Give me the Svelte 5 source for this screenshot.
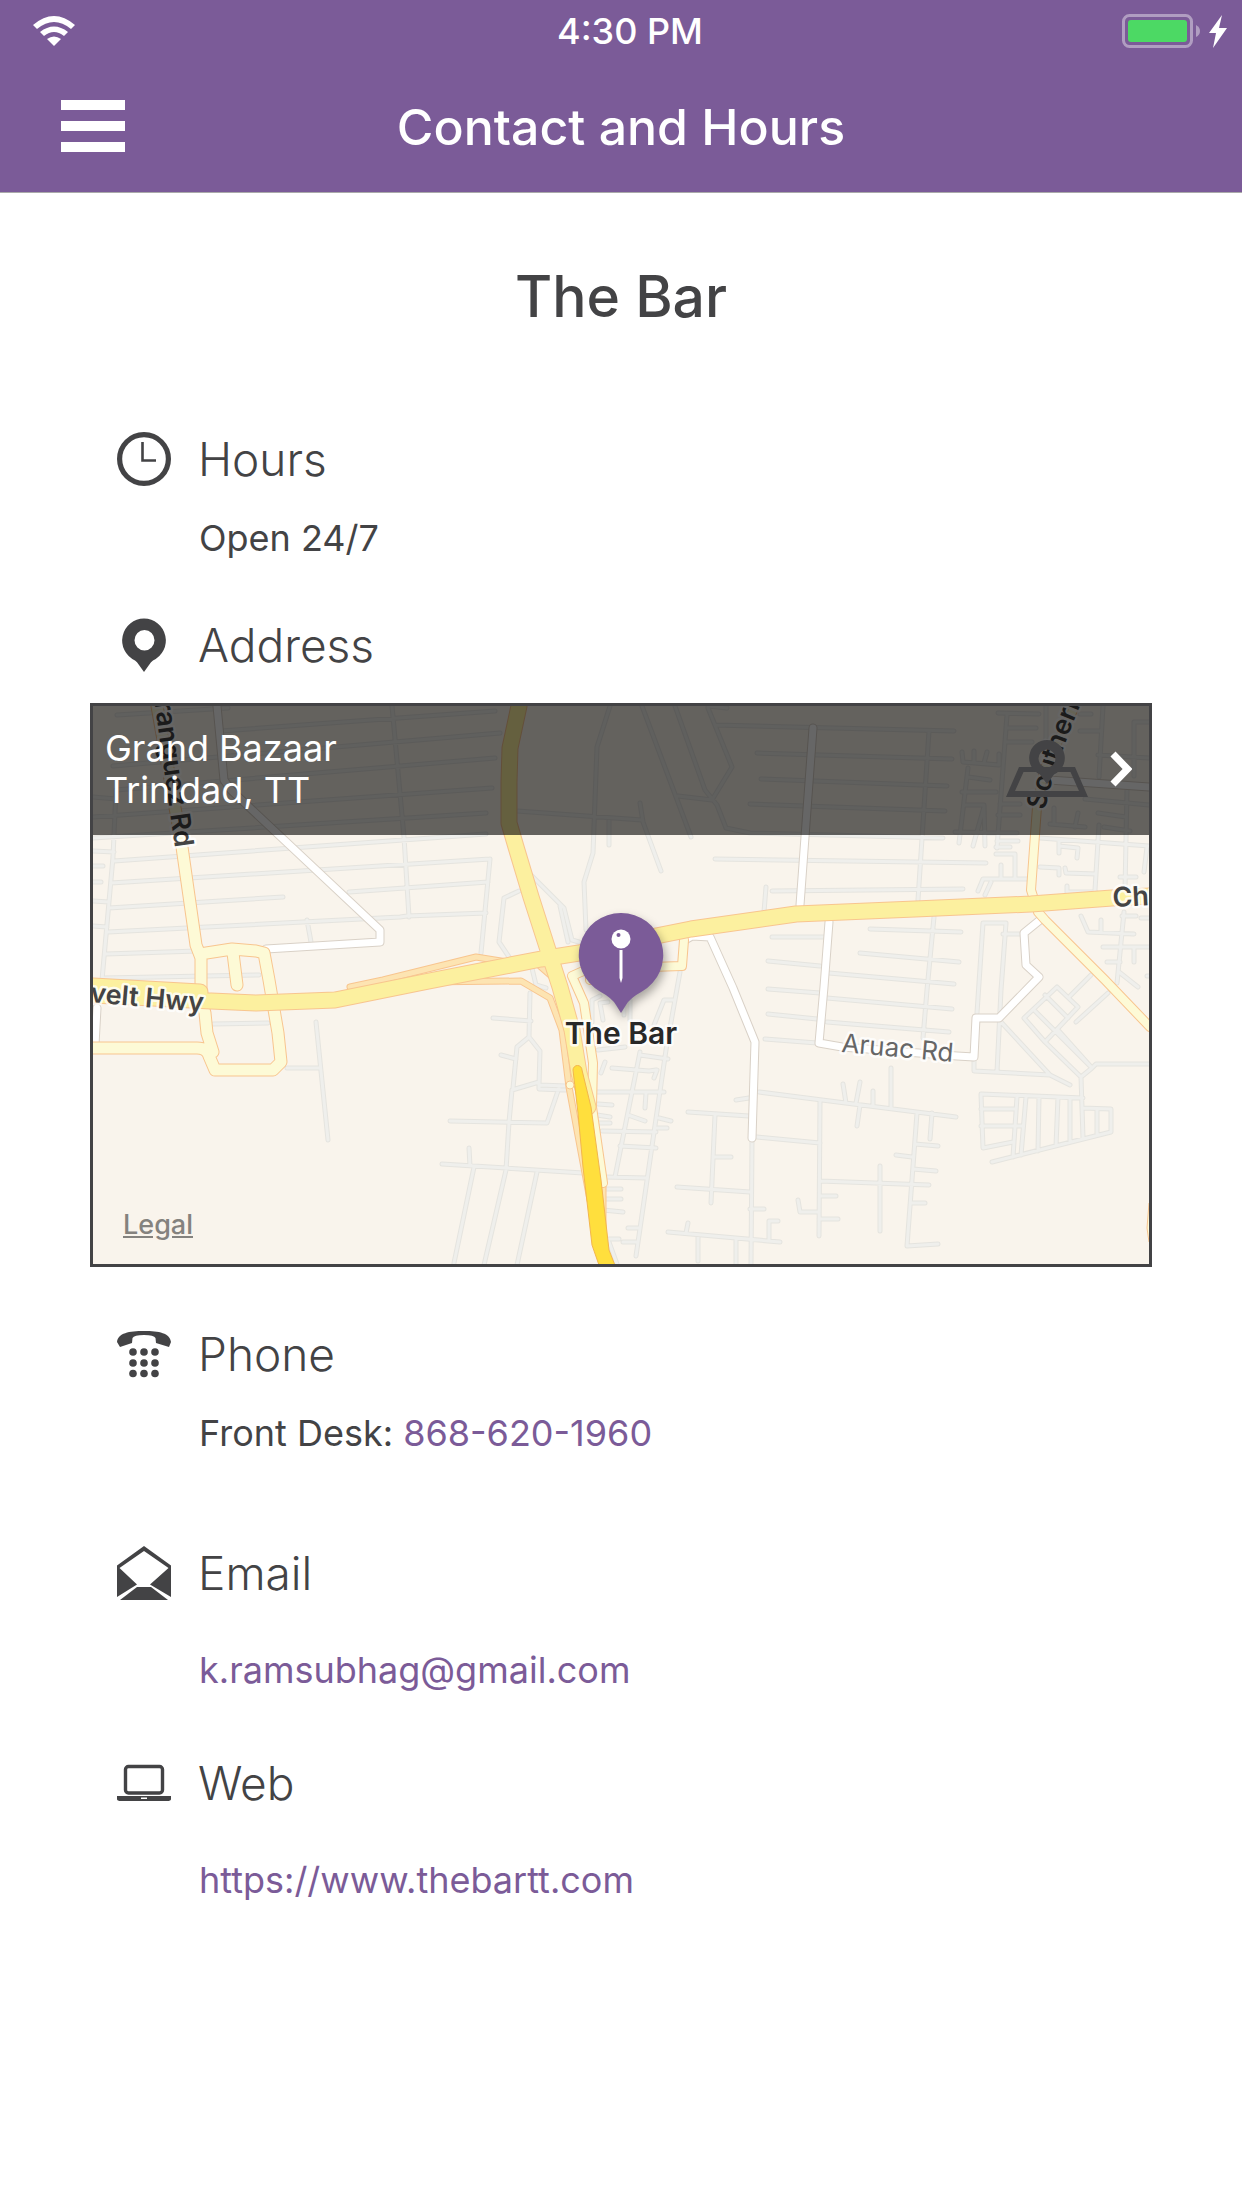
<script lang="ts">
	const place = {
		name: 'The Bar',
		hours: 'Open 24/7',
		address: ['Grand Bazaar', 'Trinidad, TT'],
		phone: '868-620-1960',
		email: 'k.ramsubhag@gmail.com',
		web: 'https://www.thebartt.com'
	};

	// map geometry, grouped by road class
	const streets = [
		// west blocks
		'M117 715L228 708M221 731L495 711M113 766L500 733M116 790L495 758M93 817L492 788M93 838L486 813',
		'M114 861L486 834M111 883L490 859M349 892L488 882M109 908L283 897M108 932L400 917L407 916L486 913',
		'M106 954L197 951M104 978L259 975M93 851L114 852M93 866H103M93 882H101M93 901L109 902M93 926L107 927M93 797L116 799',
		'M116 790L113 857L102 980M392 706L404 837L409 917M490 859L481 953M307 920L311 942M213 1024L268 1023',
		'M316 1022L328 1140M287 1068H320M493 1018L531 1021M530 993L529 1037L517 1047L513 1088M529 1037L540 1051L539 1085L566 1086',
		'M566 1090L539 1089L539 1082L512 1090L509 1122L506 1170L484 1265M559 1088L547 1123L450 1121M501 1055L516 1059',
		'M442 1164L583 1173M469 1148L470 1166M474 1167L454 1263M537 1172L517 1265',
		'M529 873L564 908L572 940L579 942M560 906L568 942M519 891L504 898L499 942L509 957M530 960L536 985L546 988',
		// north
		'M610 706L597 747L593 853L584 882L586 930M517 811L642 820M609 818V845M642 706L691 837',
		'M675 706L705 790L717 805L726 828L750 833L943 838M708 708L732 767L712 800L678 796M708 706L727 708',
		'M715 725L954 731M757 753L952 759M761 779L947 786M750 804L945 811M715 859L986 863M772 891L963 889',
		'M929 731L918 900M766 887L764 912M640 803L643 822L661 871',
		// east of the pin
		'M772 937H824M870 929L961 932M860 953L959 962M768 961L820 966M829 973L954 984M934 917L927 990L923 1038',
		'M768 989L820 993M827 998L952 1009M768 1014L817 1019M827 1022L949 1032M765 1039L817 1043',
		'M977 1013L983 923H1006L1001 990L997 1072M1003 934H1020M974 1058V1071L1050 1075L1070 1085M1001 1022L1050 1075',
		'M1057 987L1078 1007L1045 1042L1024 1018ZM1045 995L1068 1018M1034 1010L1092 1068M1058 1030L1092 1068L1081 1077L1045 1042',
		'M1092 1068L1096 1064H1150M1081 1077L1083 1138M1091 975L1070 996M1076 1022L1108 993',
		'M1083 1098L981 1094L983 1148L1013 1142M981 1109H1015M981 1126H1022M1017 1097L1013 1157M1026 1097L1021 1155M1039 1097L1038 1151',
		'M1058 1097L1056 1146M1070 1098V1142M992 1162L1111 1132V1109L1083 1108M1097 1109V1134',
		// south
		'M759 1092L822 1100L956 1117M891 1068V1108M843 1084L846 1103M860 1082L856 1103M873 1091V1105M860 1105L857 1126M820 1101L819 1236',
		'M757 1137L820 1143M917 1113L907 1246L938 1244M932 1113L930 1139M915 1144L938 1146M896 1155L912 1157M913 1169L936 1171',
		'M820 1181L929 1185M912 1203H925M880 1166V1231M820 1196H836M798 1200L800 1212H819M819 1219H838',
		'M752 1140L751 1265M688 1112L749 1116M715 1115L711 1203M715 1157H731M677 1187L750 1192M750 1209H764M668 1232L780 1242',
		'M688 1223L686 1233M698 1235V1261M736 1239V1265M778 1221H769V1240M736 1100L749 1098',
		'M680 972L666 1050L636 1256M673 1000H664L654 1025M640 1052L615 1177M640 1055L668 1059M612 1068L649 1071L656 1070M597 1092H664',
		'M602 1131L656 1132M620 1146L656 1148M605 1177L647 1178M628 1115L645 1121M659 1118L671 1121M657 1128H667M646 1093L645 1108M654 1078L657 1070',
		'M628 1228H640M623 1242H636M603 1189H621M603 1199H621M603 1210L623 1212M609 1239H619M609 1242L617 1264M598 1104L612 1105M597 1115L610 1117M598 1123H610',
		'M592 1022V1000L600 996M603 1020L600 1003L608 1002M630 1000V1020M624 1002V1015M598 1050L625 1047M605 1062L601 1073',
		// north-east blocks
		'M998 713L1039 714M1007 715L997 848M1103 706L1099 777M962 752L963 762L999 765M974 751V762M987 752L984 763M999 754V765',
		'M968 768L959 843M984 807L973 846M966 805H984L985 846M955 832L1017 833M997 841H1018M996 847H1010M968 777L990 780M962 792H996',
		'M996 854H1015V879M978 891L983 879H1027M1001 865V879M991 882L985 895M1007 728H1036M1007 742H1032M1046 706V760M1000 804H1020M998 815H1020',
		'M1040 838L1150 846M1099 825L1095 890M1127 790L1125 890M1147 847L1144 872M1059 840V853M1059 846L1078 848L1077 858',
		'M1040 867L1059 868V875M1065 868L1066 873L1096 874M1067 886V892H1096M1081 916L1088 932L1134 934M1101 920V932M1124 912L1117 983',
		'M1103 947H1150M1134 947V962M1107 962H1120M1119 972L1138 987M1122 916H1136M1120 877H1136M1141 918H1150M1150 976H1147',
		'M1134 776V722H1150M1080 714H1091M1080 731H1100M1098 755L1150 758M1085 799L1150 805M1098 813L1126 817M1104 827L1130 831M1078 813L1075 827M1050 824L1085 827M1054 808V824'
	];

	const whiteRoads =
		'M217 706L224 780L231 790L380 930V942L266 949M813 728L800 905M829 922L824 987L819 1043L842 1047L957 1056L974 1057L976 1018H999L1039 977L1026 965L1024 933L1040 920M685 940L692 936L710 937L733 988L755 1042L752 1138M1049 780L1150 787M97 1008L95 1045';
	const paleRoads =
		'M157 706L182 847L196 945L201 958V1000L205 1013L207 1033L213 1052M93 1048H197Q207 1048 209 1056L215 1070H273L281 1062L278 1033L269 980L264 953L256 951L232 949L200 954M233 953L237 985';
	const palerRight =
		'M1075 706L1044 770L1037 807L1031 890L1038 912L1045 920L1105 980L1150 1027M684 940L682 966L650 967M572 976L584 1003L593 1063L592 1107L603 1183M572 976L590 968V980';
	const ramps = 'M350 987L383 980L476 957L507 962M420 982L521 981L550 998L562 1030L569 1087L590 1200M540 966L556 980M603 1187V1230';
	const highways =
		'M93 986L200 992M93 995L211 1001L256 1003L335 1000L424 982L541 959L579 953L656 936L691 929L796 914L915 909L1031 904L1112 898L1150 896M519 706L510 748L509 782L509 823L516 847L531 897L548 950L560 987L572 1030L579 1073L588 1107';
	const mainRoad = 'M573 1070A4.500 4.500 0 0 1 582 1070L591 1107L601 1180L609 1250L616 1268H600L592 1245L583 1167L578 1113Z';
</script>

{#snippet road(d: string, kind: string)}
	<path class="casing {kind}" {d} />
	<path class="fill {kind}" {d} />
{/snippet}

<header>
	<div class="status">
		<svg class="wifi" viewBox="0 0 42 30" aria-label="Wi-Fi">
			<path d="M0 9Q21-9 42 9L38 13Q21-1 4 13Z" />
			<path d="M7 16Q21 5 35 16L31 20Q21 12 11 20Z" />
			<path d="M14 23Q21 18 28 23L21 30Z" />
		</svg>
		<time>4:30 PM</time>
		<svg class="battery" viewBox="0 0 105 34" aria-label="Battery charging">
			<rect class="shell" x="1.5" y="1.5" width="68" height="31" rx="6" />
			<rect class="charge" x="6" y="6" width="59" height="22" rx="3" />
			<path class="nub" d="M74 11Q78 13 78 17T74 23Z" />
			<path d="M100 1L87 19H94L91 34L105 14H97Z" />
		</svg>
	</div>
	<nav>
		<button class="menu" aria-label="Menu">
			<span></span>
			<span></span>
			<span></span>
		</button>
		<h1>Contact and Hours</h1>
	</nav>
</header>

<main>
	<h2>{place.name}</h2>

	<section>
		<h3>
			<svg class="icon" viewBox="0 0 54 54">
				<circle class="line" cx="27" cy="27" r="24.4" stroke-width="5.2" />
				<path class="line" d="M25.5 10V28.5H39" stroke-width="2.6" />
			</svg>
			Hours
		</h3>
		<p>{place.hours}</p>
	</section>

	<section class="address">
		<h3>
			<svg class="icon" viewBox="0 0 54 54">
				<path fill-rule="evenodd" d="M27 .5A22 22 0 0 1 36 42.500Q34 43.500 32 47L27 54L22 47Q20 43.500 18 42.500A22 22 0 0 1 27 .5ZM27.500 12A10 10.300 0 1 0 27.500 32.600A10 10.300 0 0 0 27.500 12Z" />
			</svg>
			Address
		</h3>
	</section>

	<div class="map">
		<svg class="canvas" viewBox="93 706 1056 558" role="img" aria-label="Map of {place.name}">
			<rect class="land" x="93" y="706" width="1056" height="558" />
			{@render road(streets.join(''), 'street')}
			{@render road(whiteRoads, 'white')}
			{@render road(ramps, 'ramp')}
			{@render road(palerRight, 'pale')}
			{@render road(paleRoads, 'pale wide')}
			{@render road(highways, 'highway')}
			<path class="main" d={mainRoad} />
			<circle class="node" cx="570" cy="1085" r="4" />
			<path class="edge" d="M1149 1203L1147 1228L1149 1242" />

			<g class="label">
				<text transform="translate(175 848) rotate(82)" text-anchor="end">Aranguez Rd</text>
				<text transform="translate(203 1012) rotate(5)" text-anchor="end">Roosevelt Hwy</text>
				<text transform="translate(1113 907) rotate(-3)">Churchill</text>
				<path id="southern" fill="none" d="M1045 810Q1053 770 1080 706L1180 466" />
				<text><textPath href="#southern">Southern Main Rd</textPath></text>
				<text class="minor" transform="translate(841 1052) rotate(5)">Aruac Rd</text>
			</g>

			<path class="marker" d="M621 913A42 42 0 0 1 642 991.500Q630 998 626 1005L621 1013L616 1005Q612 998 600 991.500A42 42 0 0 1 621 913Z" />
			<circle class="head" cx="621" cy="939" r="9.500" />
			<circle class="glint" cx="618.500" cy="935" r="2" />
			<path class="head" d="M619.500 950H622.500V978L621 983L619.500 978Z" />
			<text class="name" x="621" y="1044" text-anchor="middle">{place.name}</text>
		</svg>

		<a class="banner" href="#directions">
			<span class="lines">
				{#each place.address as line}
					<span>{line}</span>
				{/each}
			</span>
			<svg class="directions" viewBox="0 0 82 58">
				<path fill-rule="evenodd" d="M13 27H69L82 57H0ZM17.500 32L9 51H73L64.500 32Z" />
				<path fill-rule="evenodd" d="M41 0A18 18 0 0 1 48 34.500L41 44L34 34.500A18 18 0 0 1 41 0ZM41 9.500A8.500 9 0 1 0 41 27.500A8.500 9 0 0 0 41 9.500Z" />
			</svg>
			<svg class="chevron" viewBox="0 0 22 36"><path d="M3 3L17.500 18L3 33" /></svg>
		</a>
		<a class="legal" href="#legal">Legal</a>
	</div>

	<section class="phone">
		<h3>
			<svg class="icon" viewBox="0 0 54 54">
				<path d="M0 15C1 6 12 4 27 4S53 6 54 15L52 20L39 16L38.500 11Q37 8 27 8T15.500 11L15 16L3 20Z" />
				{#each [25, 36, 46.5] as cy}
					{#each [16, 27, 38] as cx}
						<circle {cx} {cy} r="3.800" />
					{/each}
				{/each}
			</svg>
			Phone
		</h3>
		<p>Front Desk: <a href="tel:{place.phone}">{place.phone}</a></p>
	</section>

	<section class="email">
		<h3>
			<svg class="icon" viewBox="0 0 54 54">
				<path fill-rule="evenodd" d="M27 0L54 19.500V51L33 38.500L51.500 22L27 5L2.500 22L20 38.500L0 51V19.500Z" />
				<path d="M20 41H34L51 54H3Z" />
			</svg>
			Email
		</h3>
		<p><a href="mailto:{place.email}">{place.email}</a></p>
	</section>

	<section class="web">
		<h3>
			<svg class="icon" viewBox="0 0 54 54">
				<rect class="line" x="8.500" y="10.500" width="37" height="26.500" rx="3" stroke-width="3.400" />
				<path fill-rule="evenodd" d="M0 40H54V43Q54 45 50 45H4Q0 45 0 43ZM24 41.500V43H30V41.500Z" />
			</svg>
			Web
		</h3>
		<p><a href={place.web}>{place.web}</a></p>
	</section>
</main>

<style>
	:global(body) {
		margin: 0;
		background: #fff;
		color: #434345;
		font-family: Inter, 'Liberation Sans', sans-serif;
	}

	header {
		background: #7b5b98;
		color: #fff;
		border-bottom: 1px solid #aaa;
	}

	.status,
	nav {
		display: grid;
		grid-template-columns: 1fr auto 1fr;
		align-items: center;
	}

	.status {
		height: 61px;
		padding: 0 15px 0 33px;
		font-size: 36px;
		font-weight: 500;
		fill: #fff;
	}

	.wifi {
		width: 42px;
		height: 30px;
	}

	.battery {
		width: 105px;
		height: 34px;
		justify-self: end;
	}

	.shell {
		fill: none;
		stroke: #b09dc1;
		stroke-width: 3;
	}

	.nub {
		fill: #b09dc1;
	}

	.charge {
		fill: #4cd964;
	}

	nav {
		height: 131px;
		padding: 0 61px;
	}

	.menu {
		display: flex;
		flex-direction: column;
		gap: 11px;
		width: 64px;
		padding: 0 0 2px;
		border: none;
		background: none;
		cursor: pointer;
	}

	.menu span {
		height: 10px;
		width: 100%;
		background: #fff;
	}

	h1,
	h2,
	h3,
	p {
		margin: 0;
	}

	h1 {
		font-size: 50px;
		font-weight: 500;
	}

	main {
		padding: 68px 90px;
	}

	h2 {
		font-size: 57px;
		font-weight: 500;
		line-height: 72px;
		text-align: center;
		margin-bottom: 98px;
	}

	section {
		padding: 0 27px;
	}

	h3 {
		display: flex;
		align-items: center;
		gap: 27px;
		font-size: 46px;
		font-weight: 300;
		line-height: 56px;
	}

	.icon {
		width: 54px;
		height: 54px;
		flex: none;
		fill: #434345;
	}

	.line {
		fill: none;
		stroke: #434345;
	}

	p {
		font-size: 36px;
		line-height: 44px;
		padding-left: 82px;
		margin-top: 29px;
	}

	p a {
		color: #7b5b98;
		text-decoration: none;
	}

	.address {
		margin-top: 57px;
	}

	.phone {
		margin-top: 59px;
	}

	.email {
		margin-top: 90px;
	}

	.web {
		margin-top: 63px;
	}

	.email p,
	.web p {
		margin-top: 47px;
	}

	.map {
		position: relative;
		margin-top: 30px;
		border: 3px solid #434345;
	}

	.canvas {
		display: block;
		width: 100%;
	}

	.land {
		fill: #f9f4ec;
	}

	.casing,
	.fill {
		fill: none;
		stroke-linecap: round;
		stroke-linejoin: round;
	}

	.casing {
		stroke: #f8c58f;
	}

	.casing.street {
		stroke: #e5e4df;
		stroke-width: 5;
	}

	.fill.street {
		stroke: #efefec;
		stroke-width: 3;
	}

	.casing.white {
		stroke: #d9d1c7;
		stroke-width: 9;
	}

	.fill.white {
		stroke: #fff;
		stroke-width: 7;
	}

	.casing.pale {
		stroke-width: 10;
	}

	.fill.pale {
		stroke: #fdfad6;
		stroke-width: 8;
	}

	.casing.wide {
		stroke-width: 13;
	}

	.fill.wide {
		stroke-width: 11;
	}

	.casing.ramp {
		stroke-width: 7;
	}

	.fill.ramp {
		stroke: #fde4b2;
		stroke-width: 5;
	}

	.casing.highway {
		stroke-width: 17;
	}

	.fill.highway {
		stroke: #fcf09f;
		stroke-width: 15;
	}

	.main {
		fill: #ffdf3d;
		stroke: #f3b64d;
	}

	.node,
	.edge {
		fill: #fdfad6;
		stroke: #f8c58f;
	}

	.label text,
	.name {
		fill: #444;
		font-size: 27px;
		font-weight: 600;
		stroke: #fffc;
		stroke-width: 5;
		stroke-linejoin: round;
		paint-order: stroke;
	}

	.label .minor {
		fill: #666;
		font-size: 26px;
		font-weight: 400;
	}

	text.name {
		fill: #282828;
		font-size: 30px;
	}

	.marker {
		fill: #7b5b98;
		filter: drop-shadow(2px 5px 5px #0005);
	}

	.head {
		fill: #fff;
	}

	.glint {
		fill: #7b5b98;
	}

	.banner {
		position: absolute;
		top: 0;
		left: 0;
		right: 0;
		display: flex;
		align-items: center;
		padding: 21px 17px 24px 12px;
		background: #0009;
		color: #fff;
		font-size: 36px;
		line-height: 42px;
		text-decoration: none;
	}

	.lines {
		display: flex;
		flex-direction: column;
		flex: 1;
	}

	.directions {
		width: 82px;
		height: 58px;
		fill: #434345;
	}

	.chevron {
		width: 22px;
		height: 36px;
		margin-left: 22px;
		fill: none;
		stroke: #fff;
		stroke-width: 7;
	}

	.legal {
		position: absolute;
		left: 30px;
		bottom: 23px;
		color: #84827e;
		font-size: 27px;
		font-weight: 500;
	}
</style>
